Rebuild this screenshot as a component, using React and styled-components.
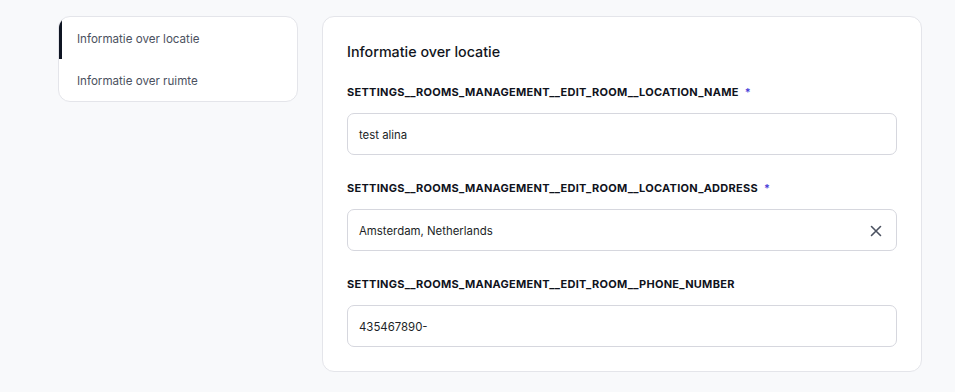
import React from "react";
import styled, { createGlobalStyle } from "styled-components";

const Global = createGlobalStyle`
  html, body { margin: 0; padding: 0; background: #f8f9fb; }
  body { font-family: Inter, "Noto Sans", sans-serif; -webkit-font-smoothing: antialiased; }
  * { box-sizing: border-box; }
`;

const Page = styled.div`
  display: flex;
  align-items: flex-start;
  gap: 24px;
  padding: 16px 0 0 58px;
  width: 955px;
  height: 392px;
`;

const Sidebar = styled.nav`
  width: 240px;
  background: #fff;
  border: 1px solid #e4e5ea;
  border-radius: 12px;
  overflow: hidden;
  display: flex;
  flex-direction: column;
`;

const NavItem = styled.div`
  height: 42px;
  display: flex;
  align-items: center;
  padding: 2px 0 0 15px;
  border-left: 3px solid ${(p) => (p.$active ? "#0f1523" : "transparent")};
  font-size: 11.6px;
  color: #4b5160;
`;

const Card = styled.section`
  width: 600px;
  background: #fff;
  border: 1px solid #e4e5ea;
  border-radius: 12px;
  padding: 23px 24px 24px 24px;
  display: flex;
  flex-direction: column;
`;

const Title = styled.h2`
  margin: 2px 0 22px;
  font-size: 14.3px;
  line-height: 20px;
  font-weight: 500;
  color: #111520;
`;

const Field = styled.div`
  display: flex;
  flex-direction: column;
  gap: 13px;
  & + & { margin-top: 25px; }
`;

const Label = styled.label`
  font-size: 11px;
  line-height: 16px;
  font-weight: 700;
  color: #10131c;
  letter-spacing: 0.27px;
`;

const Req = styled.span`
  color: #4a3fd8;
  margin-left: 6px;
  font-weight: 600;
`;

const InputBox = styled.div`
  height: 42px;
  border: 1px solid #d6d7de;
  border-radius: 7px;
  display: flex;
  align-items: center;
  padding: 1px 12px 0 11px;
  font-size: 11.4px;
  color: #1c1f27;
`;

const Value = styled.span`
  flex: 1;
`;

const Clear = styled.button`
  border: 0;
  background: none;
  padding: 0;
  display: flex;
  color: #4b5160;
  cursor: pointer;
`;

export default function App() {
  return (
    <>
      <Global />
      <Page>
        <Sidebar>
          <NavItem $active>Informatie over locatie</NavItem>
          <NavItem>Informatie over ruimte</NavItem>
        </Sidebar>
        <Card>
          <Title>Informatie over locatie</Title>
          <Field>
            <Label>
              SETTINGS__ROOMS_MANAGEMENT__EDIT_ROOM__LOCATION_NAME<Req>*</Req>
            </Label>
            <InputBox><Value>test alina</Value></InputBox>
          </Field>
          <Field>
            <Label>
              SETTINGS__ROOMS_MANAGEMENT__EDIT_ROOM__LOCATION_ADDRESS<Req>*</Req>
            </Label>
            <InputBox>
              <Value>Amsterdam, Netherlands</Value>
              <Clear aria-label="clear">
                <svg width="16" height="16" viewBox="0 0 16 16" fill="none" stroke="currentColor" strokeWidth="1.6" strokeLinecap="round">
                  <path d="M3.5 3.5l9 9M12.5 3.5l-9 9" />
                </svg>
              </Clear>
            </InputBox>
          </Field>
          <Field>
            <Label>SETTINGS__ROOMS_MANAGEMENT__EDIT_ROOM__PHONE_NUMBER</Label>
            <InputBox><Value>435467890-</Value></InputBox>
          </Field>
        </Card>
      </Page>
    </>
  );
}
